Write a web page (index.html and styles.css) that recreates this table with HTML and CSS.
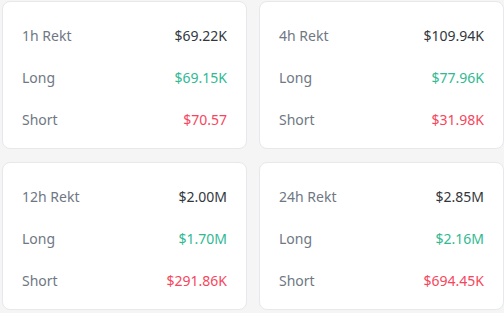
FILE: index.html
```html
<!DOCTYPE html>
<html>
<head>
<meta charset="utf-8">
<link rel="stylesheet" href="styles.css">
</head>
<body>
<div class="grid">
  <div class="card">
    <div class="row"><span class="label">1h Rekt</span><span class="value">$69.22K</span></div>
    <div class="row"><span class="label">Long</span><span class="value long">$69.15K</span></div>
    <div class="row"><span class="label">Short</span><span class="value short">$70.57</span></div>
  </div>
  <div class="card">
    <div class="row"><span class="label">4h Rekt</span><span class="value">$109.94K</span></div>
    <div class="row"><span class="label">Long</span><span class="value long">$77.96K</span></div>
    <div class="row"><span class="label">Short</span><span class="value short">$31.98K</span></div>
  </div>
  <div class="card">
    <div class="row"><span class="label">12h Rekt</span><span class="value">$2.00M</span></div>
    <div class="row"><span class="label">Long</span><span class="value long">$1.70M</span></div>
    <div class="row"><span class="label">Short</span><span class="value short">$291.86K</span></div>
  </div>
  <div class="card">
    <div class="row"><span class="label">24h Rekt</span><span class="value">$2.85M</span></div>
    <div class="row"><span class="label">Long</span><span class="value long">$2.16M</span></div>
    <div class="row"><span class="label">Short</span><span class="value short">$694.45K</span></div>
  </div>
</div>
</body>
</html>
```
FILE: styles.css
```css
html, body {
  margin: 0;
  padding: 0;
  background: #f5f5f5;
}
body {
  font-family: "Noto Sans", "Open Sans", sans-serif;
  font-size: 14px;
}
.grid {
  display: grid;
  grid-template-columns: 245px 245px;
  grid-auto-rows: 148px;
  column-gap: 12px;
  row-gap: 13px;
  padding: 1px 0 0 2px;
}
.card {
  background: #fff;
  border: 1px solid #e6e8ea;
  border-radius: 8px;
  box-sizing: border-box;
  padding: 13px 19px 0 19px;
  display: flex;
  flex-direction: column;
}
.row {
  display: flex;
  justify-content: space-between;
  align-items: center;
  height: 42px;
  line-height: 20px;
}
.label { color: #6f7784; }
.value { color: #33373d; }
.value.long { color: #31b993; }
.value.short { color: #f6465d; }
```
